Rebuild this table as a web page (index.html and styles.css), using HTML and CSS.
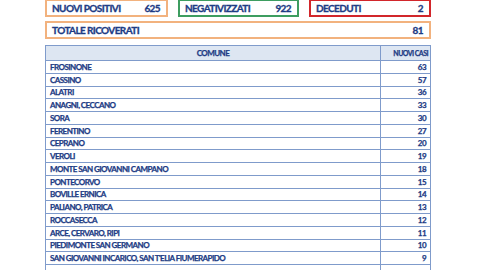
FILE: index.html
```html
<!DOCTYPE html>
<html lang="it">
<head>
<meta charset="utf-8">
<title>Covid Frosinone</title>
<link rel="stylesheet" href="styles.css">
</head>
<body>
<div class="page">
  <div class="stats">
    <div class="box box-orange"><span>NUOVI POSITIVI</span><span>625</span></div>
    <div class="box box-green"><span>NEGATIVIZZATI</span><span>922</span></div>
    <div class="box box-red"><span>DECEDUTI</span><span>2</span></div>
  </div>
  <div class="box box-orange total"><span>TOTALE RICOVERATI</span><span>81</span></div>
  <table class="cases">
    <thead>
      <tr><th class="c-name">COMUNE</th><th class="c-num">NUOVI CASI</th></tr>
    </thead>
    <tbody>
      <tr><td>FROSINONE</td><td class="num">63</td></tr>
      <tr><td>CASSINO</td><td class="num">57</td></tr>
      <tr><td>ALATRI</td><td class="num">36</td></tr>
      <tr><td>ANAGNI, CECCANO</td><td class="num">33</td></tr>
      <tr><td>SORA</td><td class="num">30</td></tr>
      <tr><td>FERENTINO</td><td class="num">27</td></tr>
      <tr><td>CEPRANO</td><td class="num">20</td></tr>
      <tr><td>VEROLI</td><td class="num">19</td></tr>
      <tr><td>MONTE SAN GIOVANNI CAMPANO</td><td class="num">18</td></tr>
      <tr><td>PONTECORVO</td><td class="num">15</td></tr>
      <tr><td>BOVILLE ERNICA</td><td class="num">14</td></tr>
      <tr><td>PALIANO, PATRICA</td><td class="num">13</td></tr>
      <tr><td>ROCCASECCA</td><td class="num">12</td></tr>
      <tr><td>ARCE, CERVARO, RIPI</td><td class="num">11</td></tr>
      <tr><td>PIEDIMONTE SAN GERMANO</td><td class="num">10</td></tr>
      <tr><td>SAN GIOVANNI INCARICO, SAN T'ELIA FIUMERAPIDO</td><td class="num">9</td></tr>
      <tr><td>&nbsp;</td><td class="num">&nbsp;</td></tr>
    </tbody>
  </table>
</div>
</body>
</html>
```

FILE: styles.css
```css
html, body {
  margin: 0;
  padding: 0;
  background: #ffffff;
  overflow: hidden;
}
body {
  font-family: Lato, "Open Sans", sans-serif;
  color: #1d3b84;
  width: 480px;
  height: 270px;
}
.page {
  margin: -1px 0 0 45px;
  width: 386px;
}
.stats {
  display: grid;
  grid-template-columns: 123px 121px 122px;
  column-gap: 10px;
}
.box {
  box-sizing: border-box;
  height: 18px;
  border: 2px solid #f2b27e;
  display: flex;
  justify-content: space-between;
  align-items: center;
  padding: 0 6px 0 5px;
  font-size: 10px;
  font-weight: 700;
  letter-spacing: -0.6px;
  -webkit-text-stroke: 0.3px currentColor;
}
.box-green { border-color: #3d9d60; }
.box-red { border-color: #d2262b; }
.total {
  margin-top: 4px;
}
.cases {
  margin-top: 6px;
  width: 386px;
  border-collapse: collapse;
  font-weight: 700;
  font-size: 8px;
  letter-spacing: -0.55px;
  -webkit-text-stroke: 0.25px currentColor;
  white-space: nowrap;
}
.cases th, .cases td {
  border: 1px solid #7f9bcb;
  padding: 0 4px;
  line-height: 10px;
}
.cases th {
  background: #dde6f2;
  height: 14px;
  text-align: center;
}
.cases th.c-num {
  width: 43px;
  font-size: 7px;
  text-align: right;
  padding-right: 2px;
}
.cases td {
  height: 11.75px;
  text-align: left;
}
.cases td.num {
  text-align: right;
  padding-right: 4px;
}
```
